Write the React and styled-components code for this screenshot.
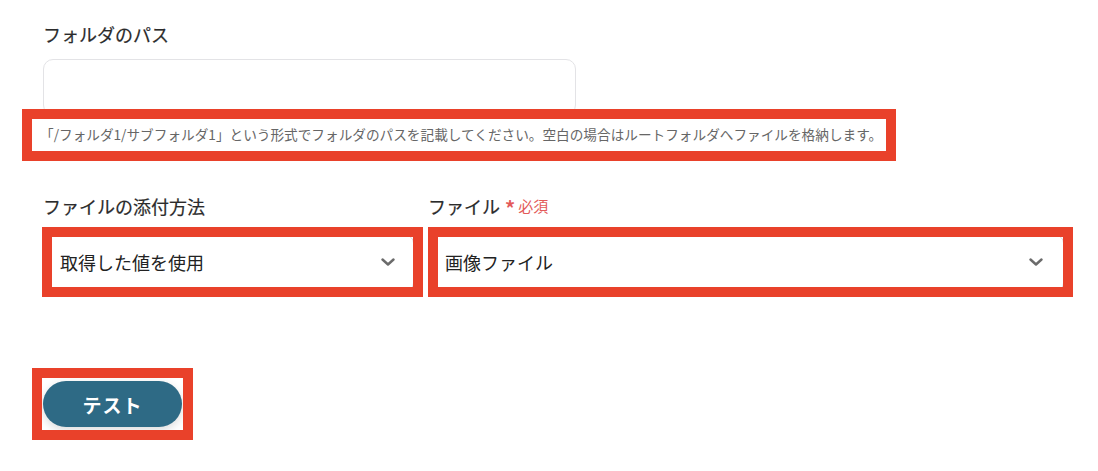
import React from "react";
import styled, { createGlobalStyle } from "styled-components";

const Global = createGlobalStyle`
  html, body { margin: 0; padding: 0; background: #fff; }
  body { font-family: "Noto Sans CJK JP", "Noto Sans", sans-serif; color: #333; }
`;

const Page = styled.div`
  position: relative;
  width: 1098px;
  height: 471px;
  box-sizing: border-box;
  padding: 23px 0 0 43px;
  overflow: hidden;
`;

const Field = styled.div`
  display: flex;
  flex-direction: column;
  width: ${(p) => p.$w}px;
`;

const Label = styled.div`
  display: flex;
  align-items: center;
  height: 22px;
  font-size: 18px;
  font-weight: 400;
  -webkit-text-stroke: 0.2px #2b2b2b;
  color: #2b2b2b;
  line-height: 22px;
  white-space: nowrap;
`;

const Required = styled.span`
  display: inline-flex;
  align-items: center;
  margin-left: 5px;
  color: #e35a5a;
  font-size: 15px;
  font-weight: 400;
  -webkit-text-stroke: 0;
  gap: 3px;
`;

const Star = styled.span`
  font-size: 20px;
  font-weight: 700;
  line-height: 1;
  margin-top: 4px;
`;

const TextInput = styled.div`
  margin-top: 14px;
  height: 56px;
  box-sizing: border-box;
  border: 1px solid #e3e3e6;
  border-radius: 10px;
  background: #fff;
`;

const Hint = styled.div`
  margin-top: 8px;
  margin-left: -3px;
  font-size: 13.65px;
  line-height: 22px;
  color: #666;
  white-space: nowrap;
`;

const Row = styled.div`
  display: flex;
  gap: 14px;
  margin-top: 50px;
`;

const Select = styled.div`
  margin-top: 18px;
  height: 56px;
  box-sizing: border-box;
  border: 1px solid #dcdcdf;
  border-radius: 8px;
  background: #fff;
  display: flex;
  align-items: center;
  justify-content: space-between;
  padding: 0 ${(p) => p.$pr}px 2px 16px;
  font-size: 18px;
  color: #222;
`;

const Chevron = () => (
  <svg width="14" height="8" viewBox="0 0 14 8" fill="none">
    <path d="M1.5 1.5 L7 6.5 L12.5 1.5" stroke="#6b6b6b" strokeWidth="2.4" strokeLinecap="round" strokeLinejoin="round" />
  </svg>
);

const Button = styled.button`
  margin-top: 90px;
  width: 139px;
  height: 46px;
  border: none;
  border-radius: 23px;
  background: #2e6a85;
  color: #fff;
  font-family: "Noto Sans CJK JP", "Noto Sans", sans-serif;
  font-size: 19px;
  font-weight: 700;
  letter-spacing: 1px;
  box-shadow: 0 3px 10px rgba(0, 0, 0, 0.14);
  display: flex;
  align-items: center;
  justify-content: center;
`;

const Mark = styled.div`
  position: absolute;
  left: ${(p) => p.$x}px;
  top: ${(p) => p.$y}px;
  width: ${(p) => p.$w}px;
  height: ${(p) => p.$h}px;
  box-sizing: border-box;
  border: 10px solid #e9412a;
  pointer-events: none;
`;

export default function App() {
  return (
    <>
      <Global />
      <Page>
        <Field $w={533}>
          <Label>フォルダのパス</Label>
          <TextInput />
          <Hint>「/フォルダ1/サブフォルダ1」という形式でフォルダのパスを記載してください。空白の場合はルートフォルダへファイルを格納します。</Hint>
        </Field>

        <Row>
          <Field $w={371}>
            <Label>ファイルの添付方法</Label>
            <Select $pr={18}>
              <span>取得した値を使用</span>
              <Chevron />
            </Select>
          </Field>
          <Field $w={636}>
            <Label>
              ファイル
              <Required>
                <Star>*</Star>必須
              </Required>
            </Label>
            <Select $pr={20}>
              <span>画像ファイル</span>
              <Chevron />
            </Select>
          </Field>
        </Row>

        <Button>テスト</Button>

        <Mark $x={22} $y={109} $w={874} $h={52} />
        <Mark $x={42} $y={227} $w={381} $h={70} />
        <Mark $x={428} $y={227} $w={645} $h={70} />
        <Mark $x={32} $y={368} $w={161} $h={72} />
      </Page>
    </>
  );
}
